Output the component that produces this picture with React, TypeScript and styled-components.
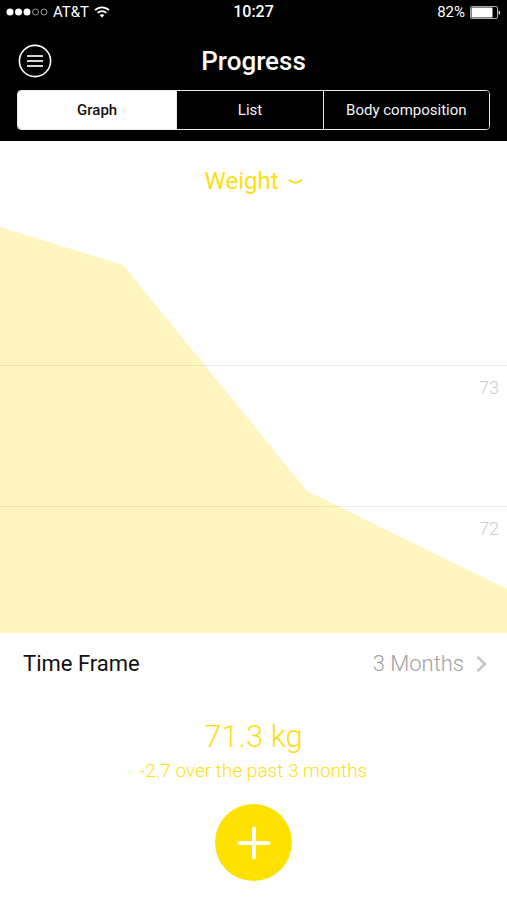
import React, { useState } from "react";
import styled, { createGlobalStyle } from "styled-components";

const YELLOW = "#ffe100";
const YELLOW_TEXT = "#fbdf14";

const GlobalStyle = createGlobalStyle`
  *, *::before, *::after { box-sizing: border-box; }
  body {
    margin: 0;
    background: #fff;
    color: #111;
    font-family: Roboto, "Liberation Sans", sans-serif;
  }
  button, select {
    margin: 0;
    padding: 0;
    border: 0;
    background: none;
    color: inherit;
    font: inherit;
    cursor: pointer;
  }
`;

const Screen = styled.div`
  display: flex;
  flex-direction: column;
  min-height: 100vh;
`;

const Header = styled.header`
  padding-bottom: 11px;
  background: #000;
  color: #fff;
`;

const StatusBar = styled.div`
  display: grid;
  grid-template-columns: 1fr auto 1fr;
  align-items: center;
  height: 24px;
  padding: 0 6px;
  font-size: 15px;
  line-height: 24px;
`;

const StatusGroup = styled.div<{ $end?: boolean }>`
  display: flex;
  align-items: center;
  justify-content: ${(p) => (p.$end ? "flex-end" : "flex-start")};
  gap: 5px;
`;

const Clock = styled.time`
  font-size: 16px;
  font-weight: 500;
`;

const TitleBar = styled.div`
  display: grid;
  grid-template-columns: 34px 1fr 34px;
  align-items: center;
  height: 66px;
  padding: 8px 18px 0;
`;

const MenuButton = styled.button`
  display: flex;
  width: 34px;
  height: 34px;
`;

const Title = styled.h1`
  margin: 0;
  font-size: 26px;
  font-weight: 500;
  line-height: 32px;
  text-align: center;
`;

const Tabs = styled.div`
  display: grid;
  grid-template-columns: 159fr 147fr 167fr;
  height: 40px;
  margin: 0 17px;
  border: 1px solid #e8e8e8;
  border-radius: 4px;
  overflow: hidden;
`;

const Tab = styled.button<{ $active: boolean }>`
  background: ${(p) => (p.$active ? "#fff" : "#000")};
  color: ${(p) => (p.$active ? "#111" : "#f4f4f4")};
  font-size: 15px;
  font-weight: ${(p) => (p.$active ? 500 : 400)};
  line-height: 20px;

  & + & {
    border-left: 1px solid #e8e8e8;
  }
`;

const ChartSection = styled.section`
  display: flex;
  flex: 1;
  flex-direction: column;
`;

const MetricPicker = styled.div`
  display: flex;
  align-items: center;
  justify-content: center;
  gap: 9px;
  height: 80px;
  color: ${YELLOW_TEXT};
`;

const MetricSelect = styled.select`
  appearance: none;
  field-sizing: content;
  font-size: 24px;
  line-height: 32px;
`;

const Chart = styled.div`
  position: relative;
  flex: 1;
  min-height: 240px;
`;

const ChartArea = styled.svg`
  position: absolute;
  inset: 0;
  width: 100%;
  height: 100%;
`;

const GridLabel = styled.span`
  position: absolute;
  right: 8px;
  padding-top: 11px;
  color: #cbcbcb;
  font-size: 18px;
  font-weight: 300;
  line-height: 24px;
`;

const TimeFrameRow = styled.button`
  display: flex;
  align-items: center;
  justify-content: space-between;
  height: 62px;
  padding: 0 20px 0 23px;
  font-size: 22px;
  line-height: 28px;
`;

const TimeFrameValue = styled.span`
  display: flex;
  align-items: center;
  gap: 12px;
  color: #a2a2a2;
  font-weight: 300;
`;

const Summary = styled.section`
  display: flex;
  flex-direction: column;
  align-items: center;
  padding: 22px 16px 19px;
  color: ${YELLOW_TEXT};
`;

const CurrentValue = styled.p`
  margin: 0;
  font-size: 31px;
  font-weight: 300;
  line-height: 40px;
`;

const Change = styled.p`
  margin: 0 0 19px;
  font-size: 19px;
  font-weight: 300;
  line-height: 28px;
`;

const AddButton = styled.button`
  display: flex;
  align-items: center;
  justify-content: center;
  width: 77px;
  height: 77px;
  border-radius: 50%;
  background: ${YELLOW};
`;

const CHART_W = 507;
const CHART_H = 412;
const points = [
  [0, 6],
  [123, 44],
  [307, 270],
  [507, 368],
];
const gridLines = [
  { label: "73", y: 144 },
  { label: "72", y: 285 },
];
const areaPath = `M${points.map((p) => p.join(" ")).join("L")}L${CHART_W} ${CHART_H}L0 ${CHART_H}Z`;

const SignalDots = () => (
  <svg width="42" height="10" viewBox="0 0 42 10" aria-hidden="true">
    {[4, 12.5, 21].map((x) => (
      <circle key={x} cx={x} cy="5" r="3.5" fill="#fff" />
    ))}
    {[29.5, 38].map((x) => (
      <circle key={x} cx={x} cy="5" r="3" fill="none" stroke="#aaa" strokeWidth="0.9" />
    ))}
  </svg>
);

const WifiIcon = () => (
  <svg width="16" height="12" viewBox="0 0 16 12" fill="none" stroke="#fff" strokeWidth="1.7" aria-hidden="true">
    <path d="M1 4.2C4.9.3 11.1.3 15 4.2" />
    <path d="M3.6 6.9c2.5-2.4 6.3-2.4 8.8 0" />
    <path d="M8 11.5 5.6 9.1c1.4-1.2 3.4-1.2 4.8 0z" fill="#fff" stroke="none" />
  </svg>
);

const BatteryIcon = () => (
  <svg width="31" height="13" viewBox="0 0 31 13" aria-hidden="true">
    <rect x="0.5" y="0.5" width="27" height="12" rx="1.5" fill="none" stroke="#aaa" />
    <rect x="1.5" y="1.5" width="21" height="10" rx="0.5" fill="#fff" />
    <path d="M28.7 4.2c1.8.8 1.8 3.8 0 4.6z" fill="#fff" />
  </svg>
);

const MenuIcon = () => (
  <svg width="34" height="34" viewBox="0 0 34 34" fill="none" aria-hidden="true">
    <circle cx="17" cy="17" r="15.6" stroke="#fff" strokeWidth="1.6" />
    <path d="M9 12h16M9 17h16M9 22h16" stroke="#d4d4d4" strokeWidth="2" />
  </svg>
);

const SmileChevron = () => (
  <svg width="15" height="8" viewBox="0 0 15 8" fill="none" aria-hidden="true">
    <path d="M1.5 3 5 5.2Q7.5 6.6 10 5.2L13.5 3" stroke={YELLOW_TEXT} strokeWidth="1.9" strokeLinecap="round" />
  </svg>
);

const ChevronRight = () => (
  <svg width="11" height="18" viewBox="0 0 11 18" fill="none" aria-hidden="true">
    <path d="M1.5 1.8 9 9l-7.5 7.2" stroke="#c4c4c4" strokeWidth="2.5" />
  </svg>
);

const PlusIcon = () => (
  <svg width="34" height="34" viewBox="0 0 34 34" aria-hidden="true">
    <path d="M17 2.5v29M2.5 17h29" stroke="#fff" strokeWidth="4" strokeLinecap="round" />
  </svg>
);

const tabs = ["Graph", "List", "Body composition"];

export default function App() {
  const [active, setActive] = useState("Graph");
  const [metric, setMetric] = useState("Weight");

  return (
    <Screen>
      <GlobalStyle />
      <Header>
        <StatusBar>
          <StatusGroup>
            <SignalDots />
            <span>AT&amp;T</span>
            <WifiIcon />
          </StatusGroup>
          <Clock>10:27</Clock>
          <StatusGroup $end>
            <span>82%</span>
            <BatteryIcon />
          </StatusGroup>
        </StatusBar>
        <TitleBar>
          <MenuButton type="button" aria-label="Menu">
            <MenuIcon />
          </MenuButton>
          <Title>Progress</Title>
        </TitleBar>
        <Tabs role="tablist">
          {tabs.map((name) => (
            <Tab
              key={name}
              type="button"
              role="tab"
              aria-selected={active === name}
              $active={active === name}
              onClick={() => setActive(name)}
            >
              {name}
            </Tab>
          ))}
        </Tabs>
      </Header>

      <ChartSection>
        <MetricPicker>
          <MetricSelect aria-label="Metric" value={metric} onChange={(e) => setMetric(e.target.value)}>
            <option>Weight</option>
          </MetricSelect>
          <SmileChevron />
        </MetricPicker>
        <Chart>
          <ChartArea viewBox={`0 0 ${CHART_W} ${CHART_H}`} preserveAspectRatio="none" role="img" aria-label="Weight over time">
            <path d={areaPath} fill="#fff5c0" />
            {gridLines.map((g) => (
              <line
                key={g.label}
                x1="0"
                x2={CHART_W}
                y1={g.y + 0.5}
                y2={g.y + 0.5}
                stroke="#000"
                strokeOpacity="0.07"
                vectorEffect="non-scaling-stroke"
              />
            ))}
          </ChartArea>
          {gridLines.map((g) => (
            <GridLabel key={g.label} style={{ top: `${(g.y / CHART_H) * 100}%` }}>
              {g.label}
            </GridLabel>
          ))}
        </Chart>
      </ChartSection>

      <TimeFrameRow type="button">
        <span>Time Frame</span>
        <TimeFrameValue>
          3 Months
          <ChevronRight />
        </TimeFrameValue>
      </TimeFrameRow>

      <Summary>
        <CurrentValue>71.3 kg</CurrentValue>
        <Change>-2.7 over the past 3 months</Change>
        <AddButton type="button" aria-label="Add measurement">
          <PlusIcon />
        </AddButton>
      </Summary>
    </Screen>
  );
}
